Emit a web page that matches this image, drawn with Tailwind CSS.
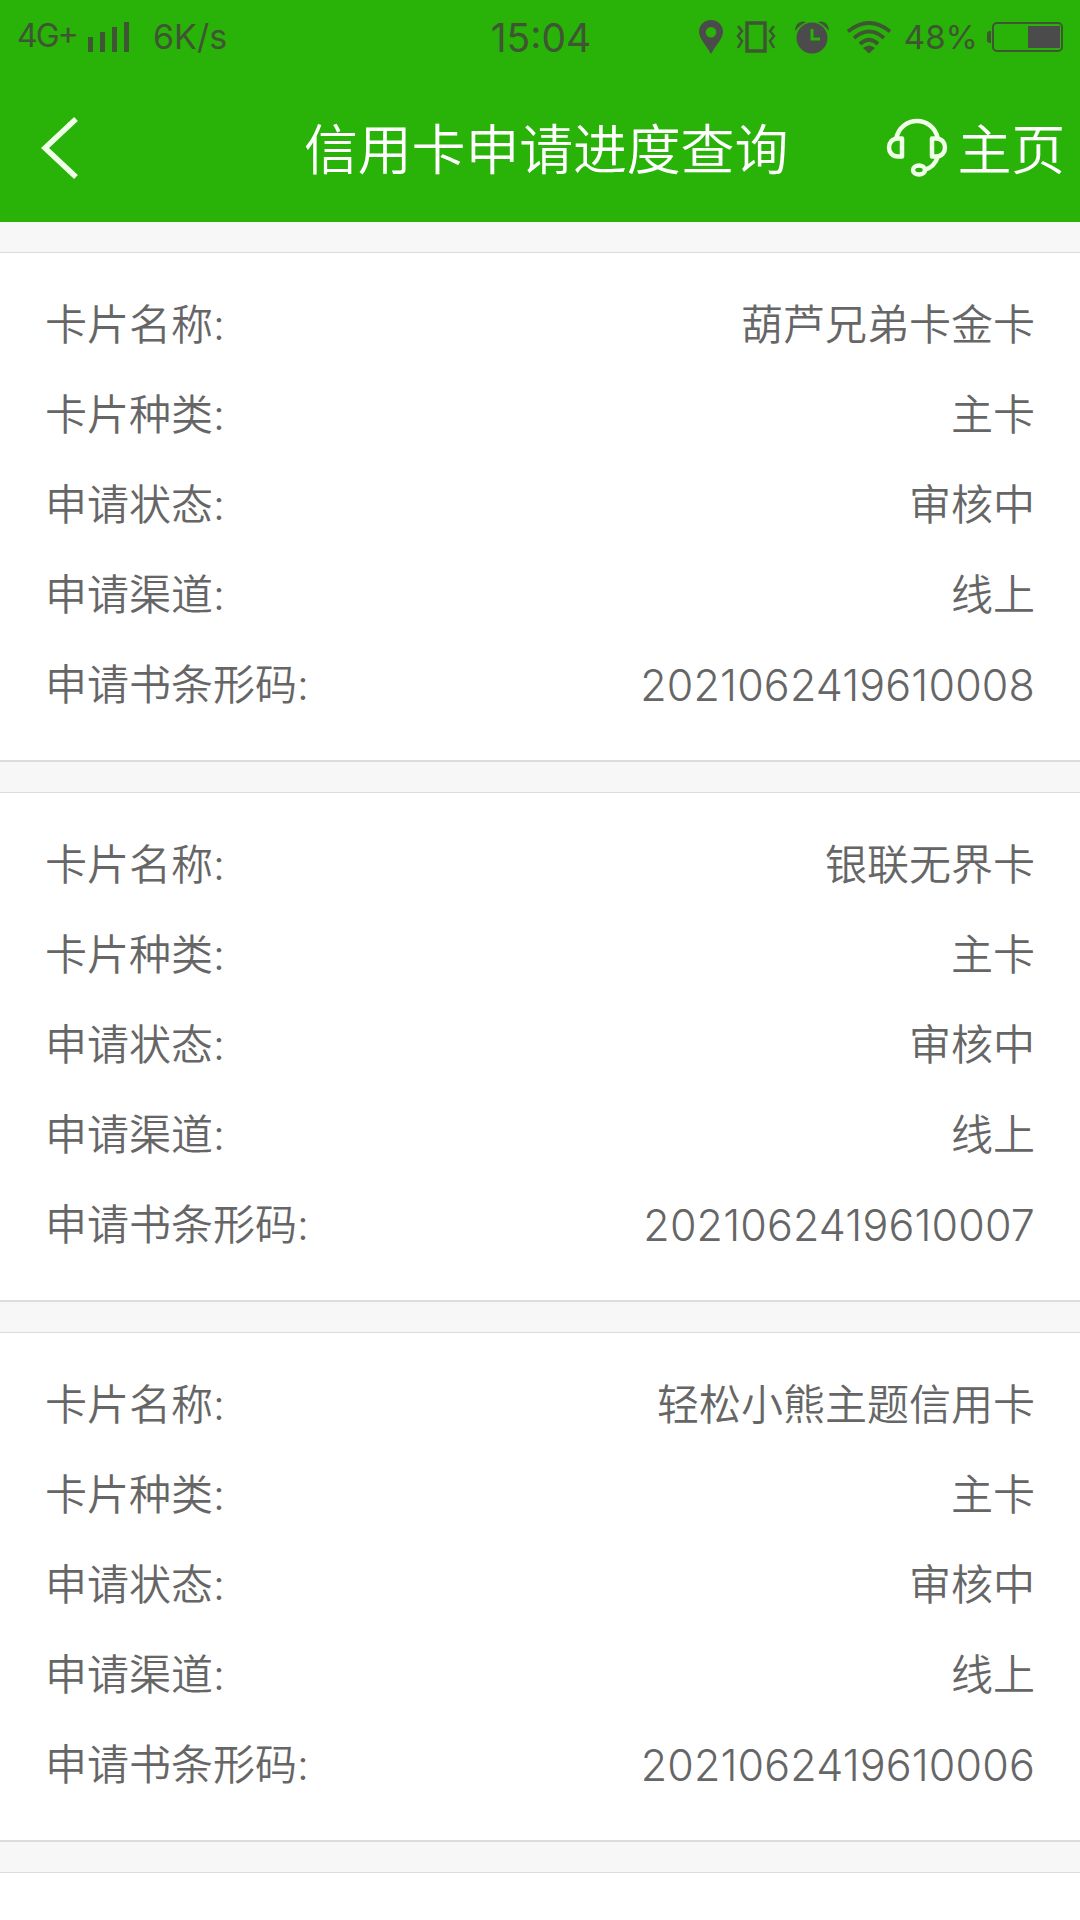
<!DOCTYPE html>
<html lang="zh-CN">
<head>
<meta charset="utf-8">
<title>信用卡申请进度查询</title>
<script src="https://cdn.jsdelivr.net/npm/@tailwindcss/browser@4"></script>
</head>
<body class="w-[1080px] h-[1920px] overflow-hidden bg-[#f7f7f7] font-['Inter','Noto_Sans_CJK_SC',sans-serif] font-[350] text-[#666]">
<header class="h-[222px] bg-[#29b208]">
  <div class="h-[74px] grid grid-cols-[1fr_auto_1fr] items-center pl-[17px] pr-[15px] text-[#3f5634] font-normal">
    <div class="flex items-center">
      <span class="w-[60px] text-[32px] leading-none tracking-[-2px] whitespace-nowrap -translate-y-px [font-feature-settings:'case']">4G+</span>
      <svg class="ml-[10px] w-[44px] h-[32px]" viewBox="0 0 44 32" fill="currentColor"><path d="M1 16h5v15H1zM13 11h5v20h-5zM25 6h5v25h-5zM37 1h5v30h-5z"/></svg>
      <span class="ml-[22px] text-[34px] leading-none whitespace-nowrap">6K/s</span>
    </div>
    <span class="text-[39px] leading-none">15:04</span>
    <div class="flex items-center justify-end">
      <svg class="w-[26px] h-[36px]" viewBox="0 0 26 36"><path fill="#4b4b4b" fill-rule="evenodd" d="M13 1C6 1 1 6 1 13c0 6 7 13 12 22 5-9 12-16 12-22C25 6 20 1 13 1zm0 7a5.300 5.300 0 1 1 0 10.600A5.300 5.300 0 0 1 13 8z"/></svg>
      <svg class="ml-[12px] w-[40px] h-[34px]" viewBox="0 0 40 34" fill="none" stroke="currentColor"><path stroke-width="3.500" d="M11 3h18v28H11z"/><path stroke-width="2.500" d="M2 6l4 5-4 5 4 5-4 7M38 6l-4 5 4 5-4 5 4 7"/></svg>
      <svg class="ml-[18px] w-[36px] h-[34px]" viewBox="0 0 36 34"><circle cx="18" cy="18" r="15.500" fill="#4b4b4b"/><path fill="none" stroke="#29b208" stroke-width="3" d="M18 9v10h8"/><path fill="currentColor" d="M1 11C1 4 6 0 12 2 8 4 4 7 1 11zM35 11C35 4 30 0 24 2c4 2 8 5 11 9z"/></svg>
      <svg class="ml-[16px] w-[46px] h-[34px]" viewBox="0 0 46 34" fill="none" stroke="currentColor" stroke-width="3.800"><path d="M2 11.500Q23-5.500 44 11.500M8 18Q23 5 38 18M14 24Q23 15.500 32 24"/><path fill="currentColor" stroke="none" d="M17 28q6-5 12 0l-6 5.500z"/></svg>
      <span class="ml-[12px] text-[33px] leading-none">48%</span>
      <svg class="ml-[8px] w-[79px] h-[32px]" viewBox="0 0 79 32"><rect x="7" y="2" width="69" height="28" rx="4" fill="none" stroke="currentColor" stroke-width="2"/><path fill="currentColor" d="M5 10v12H4q-3 0-3-3v-6q0-3 3-3z"/><path fill="#4b4b4b" d="M42 5h32v22H42z"/></svg>
    </div>
  </div>
  <div class="h-[148px] grid grid-cols-[304px_1fr_auto] items-center pr-[15px] text-white text-[54px] leading-none">
    <svg class="ml-[40px] w-[40px] h-[64px]" viewBox="0 0 40 64" fill="none" stroke="#f0ffe8" stroke-width="5.500"><path d="M36 3L5 32l31 29"/></svg>
    <h1 class="tracking-[-0.2px] whitespace-nowrap pt-[5px]">信用卡申请进度查询</h1>
    <div class="flex items-center">
      <svg class="w-[62px] h-[60px]" viewBox="0 0 62 60" fill="none" stroke="#f0ffe8" stroke-width="4.500"><path d="M10 21C15 -3 47 -3 52 21M52 38c-2 7-6 12-14 14"/><path d="M16 20.500v18h-4c-12 0-12-18 0-18zM46 20.500v18h4c12 0 12-18 0-18z" stroke-linejoin="round"/><ellipse cx="33" cy="52" rx="6" ry="4.500"/></svg>
      <span class="ml-[9px] tracking-[-0.2px] whitespace-nowrap pt-[5px]">主页</span>
    </div>
  </div>
</header>
<main id="list" class="pt-[30px] flex flex-col gap-[30px] text-[42px]"></main>
<script>
const cards = [
  ['葫芦兄弟卡金卡', '2021062419610008'],
  ['银联无界卡', '2021062419610007'],
  ['轻松小熊主题信用卡', '2021062419610006'],
];
const row = (label, value, cls = '') =>
  `<div class="h-[90px] flex items-center justify-between leading-none"><span>${label}:</span><span class="${cls}">${value}</span></div>`;
document.getElementById('list').innerHTML = cards.map(([name, code]) => `
  <section class="h-[510px] shrink-0 bg-white border-t border-b-2 border-[#dcdcdc] pt-[27px] pl-[45px] pr-[45px]">
    ${row('卡片名称', name)}${row('卡片种类', '主卡')}${row('申请状态', '审核中')}${row('申请渠道', '线上')}${row('申请书条形码', code, 'text-[43px] font-light tracking-[0.15px]')}
  </section>`).join('') + '<section class="h-[60px] shrink-0 bg-white border-t border-[#dcdcdc]"></section>';
</script>
</body>
</html>
